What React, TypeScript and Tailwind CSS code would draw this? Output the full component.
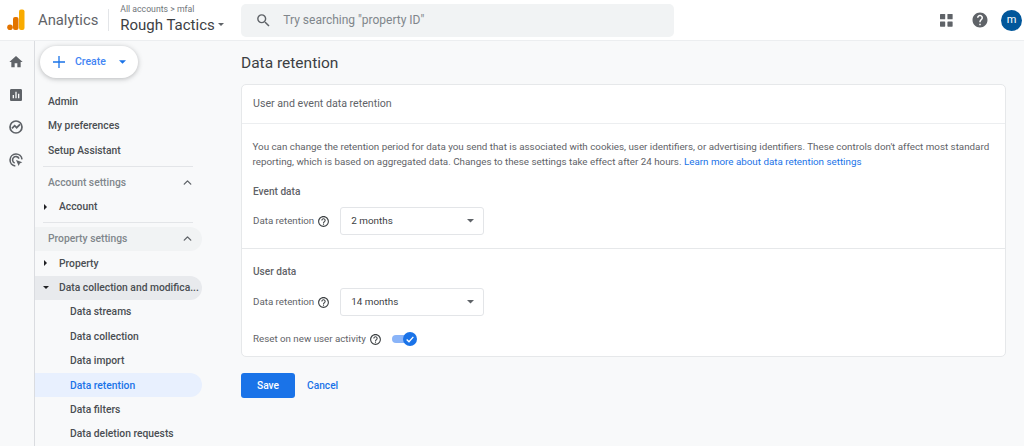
import { ChevronUp } from "lucide-react";

function Caret({ className }: { className: string }) {
  return (
    <svg viewBox="0 0 10 5" className={className} fill="currentColor">
      <path d="M0 0h10L5 5z" />
    </svg>
  );
}

function HelpIcon() {
  return (
    <svg viewBox="0 0 24 24" className="w-[13px] h-[13px] text-[#3c4043]" fill="currentColor">
      <path d="M11 18h2v-2h-2v2zm1-16C6.48 2 2 6.48 2 12s4.48 10 10 10 10-4.48 10-10S17.52 2 12 2zm0 18c-4.41 0-8-3.59-8-8s3.59-8 8-8 8 3.59 8 8-3.59 8-8 8zm0-14c-2.21 0-4 1.79-4 4h2c0-1.1.9-2 2-2s2 .9 2 2c0 2-3 1.75-3 5h2c0-2.25 3-2.5 3-5 0-2.21-1.79-4-4-4z" />
    </svg>
  );
}

function Row({ label, indent, active, caret }: { label: string; indent?: boolean; active?: boolean; caret?: "right" | "down" }) {
  return (
    <div
      className={`h-[24.4px] flex items-center rounded-r-full text-[10.3px] font-medium whitespace-nowrap ${
        active ? "bg-[#e8f0fe] text-[#1a73e8]" : caret === "down" ? "bg-[#e8eaed] text-[#4a4e52]" : "text-[#4a4e52]"
      } ${indent ? "pl-[35px]" : caret ? "pl-[24px]" : "pl-[13px]"} relative`}
    >
      {caret === "right" && (
        <svg viewBox="0 0 5 10" className="absolute left-[9px] top-[9px] w-[3px] h-[6px] text-[#202124]" fill="currentColor">
          <path d="M0 0l5 5-5 5z" />
        </svg>
      )}
      {caret === "down" && (
        <svg viewBox="0 0 10 5" className="absolute left-[8px] top-[10px] w-[6px] h-[3px] text-[#202124]" fill="currentColor">
          <path d="M0 0h10L5 5z" />
        </svg>
      )}
      {label}
    </div>
  );
}

function SectionHead({ label, shaded }: { label: string; shaded?: boolean }) {
  return (
    <div
      className={`h-[24.4px] flex items-center justify-between pl-[13px] pr-[8px] rounded-r-full text-[10.3px] font-medium text-[#80868b] ${
        shaded ? "bg-[#f1f3f4]" : ""
      }`}
    >
      {label}
      <ChevronUp className="w-[13px] h-[13px] text-[#5f6368]" strokeWidth={2.5} />
    </div>
  );
}

function Divider() {
  return <div className="h-[7.6px] flex items-center pl-[8px] pr-[9px]"><div className="h-px w-full bg-[#e3e5e8]" /></div>;
}

function RetentionSelect({ value }: { value: string }) {
  return (
    <div className="w-[144px] h-[28px] bg-white border border-[#e3e5e8] rounded-[3px] flex items-center justify-between pl-[10px] pr-[9px] text-[9.9px] text-[#3c4043]">
      {value}
      <Caret className="w-[7px] h-[3.5px] text-[#5f6368]" />
    </div>
  );
}

function RailIcon({ d }: { d: string }) {
  return (
    <svg viewBox="0 0 24 24" className="w-[16px] h-[16px] text-[#5f6368]" fill="currentColor">
      <path d={d} />
    </svg>
  );
}

export default function App() {
  return (
    <div className="w-[1024px] h-[446px] overflow-hidden flex flex-col bg-[#f8f9fa] font-['Roboto',sans-serif]">
      {/* top bar */}
      <header className="h-[41px] shrink-0 bg-white border-b border-[#eceef0] flex items-center">
        <svg viewBox="0 0 18 22" className="w-[18px] h-[22px] ml-[7px]">
          <rect x="12" y="0.5" width="5.5" height="20.5" rx="2" fill="#f9ab00" />
          <rect x="6" y="8" width="5.5" height="13" rx="2" fill="#e37400" />
          <circle cx="3" cy="18.2" r="2.8" fill="#e37400" />
        </svg>
        <span className="ml-[13px] text-[14.8px] text-[#5f6368]">Analytics</span>
        <div className="ml-[10px] w-px h-[22px] bg-[#e3e5e8]" />
        <div className="ml-[11px] w-[121px] flex flex-col">
          <div className="text-[8.7px] leading-[10px] text-[#70757a] mt-[-2px]">All accounts &gt; mfal</div>
          <div className="flex items-center text-[15px] leading-[20px] text-[#3c4043] mt-[1px]">
            Rough Tactics
            <Caret className="w-[6px] h-[3px] ml-[3px] text-[#5f6368]" />
          </div>
        </div>
        <div className="w-[433px] h-[33px] bg-[#f1f3f4] rounded-[5px] flex items-center">
          <svg viewBox="0 0 24 24" className="w-[17px] h-[17px] ml-[14px] text-[#5f6368]" fill="currentColor">
            <path d="M15.5 14h-.79l-.28-.27A6.47 6.47 0 0 0 16 9.5 6.5 6.5 0 1 0 9.5 16c1.61 0 3.09-.59 4.23-1.57l.27.28v.79l5 4.99L20.49 19l-4.99-5zm-6 0C7.01 14 5 11.99 5 9.5S7.01 5 9.5 5 14 7.01 14 9.5 11.99 14 9.5 14z" />
          </svg>
          <span className="ml-[11px] text-[12px] text-[#80868b]">Try searching "property ID"</span>
        </div>
        <div className="ml-auto flex items-center">
          <svg viewBox="0 0 14 14" className="w-[13px] h-[13px] text-[#5f6368]" fill="currentColor">
            <rect x="0" y="0" width="5.6" height="5.6" rx="0.6" />
            <rect x="8" y="0" width="5.6" height="5.6" rx="0.6" />
            <rect x="0" y="8" width="5.6" height="5.6" rx="0.6" />
            <rect x="8" y="8" width="5.6" height="5.6" rx="0.6" />
          </svg>
          <svg viewBox="0 0 24 24" className="ml-[18px] w-[18px] h-[18px] text-[#5f6368]" fill="currentColor">
            <path d="M12 2C6.48 2 2 6.48 2 12s4.48 10 10 10 10-4.48 10-10S17.52 2 12 2zm1 17h-2v-2h2v2zm2.07-7.75l-.9.92C13.45 12.9 13 13.5 13 15h-2v-.5c0-1.1.45-2.1 1.17-2.83l1.24-1.26c.37-.36.59-.86.59-1.41 0-1.1-.9-2-2-2s-2 .9-2 2H8c0-2.21 1.79-4 4-4s4 1.79 4 4c0 .88-.36 1.68-.93 2.25z" />
          </svg>
          <div className="ml-[12px] mr-[2px] w-[21px] h-[21px] rounded-full bg-[#01579b] text-white text-[11px] flex items-center justify-center">m</div>
        </div>
      </header>

      <div className="flex-1 flex min-h-0">
        {/* icon rail */}
        <nav className="w-[35px] shrink-0 border-r border-[#dadce0] flex flex-col items-center gap-[16.5px] pt-[13px] pr-[3px]">
          <RailIcon d="M10 20v-6h4v6h5v-8h3L12 3 2 12h3v8z" />
          <RailIcon d="M19 3H5c-1.1 0-2 .9-2 2v14c0 1.1.9 2 2 2h14c1.1 0 2-.9 2-2V5c0-1.1-.9-2-2-2zM9 17H7v-5h2v5zm4 0h-2V7h2v10zm4 0h-2v-7h2v7z" />
          <svg viewBox="0 0 24 24" className="w-[16px] h-[16px] text-[#5f6368]" fill="none" stroke="currentColor" strokeWidth="2.6">
            <circle cx="12" cy="12" r="9" />
            <path d="M6 14l4-4 3 3 5-5" />
          </svg>
          <svg viewBox="0 0 24 24" className="w-[16px] h-[16px] text-[#5f6368]" fill="none" stroke="currentColor" strokeWidth="2.4">
            <path d="M11 21a9 9 0 1 1 10-10" />
            <path d="M10 16.5a5 5 0 1 1 6.5-6.5" />
            <path d="M12 12l9.5 3.5-3.8 1.7-1.7 3.8z" fill="currentColor" stroke="none" />
          </svg>
        </nav>

        {/* sidebar */}
        <aside className="w-[167px] shrink-0 flex flex-col">
          <div className="pl-[5px] pt-[5px] pb-[5px]">
            <div className="w-[98px] h-[32px] bg-white rounded-full shadow-[0_1px_5px_rgba(60,64,67,0.35)] flex items-center pl-[13px] text-[#1a73e8]">
              <svg viewBox="0 0 12 12" className="w-[12px] h-[12px]" fill="none" stroke="currentColor" strokeWidth="1.3">
                <path d="M6 0v12M0 6h12" />
              </svg>
              <span className="ml-[10px] text-[10.5px] font-medium text-[#4285f4]">Create</span>
              <Caret className="ml-[13px] w-[7px] h-[4px]" />
            </div>
          </div>
          <div className="mt-[6.6px]">
            <Row label="Admin" />
            <Row label="My preferences" />
            <Row label="Setup Assistant" />
            <Divider />
            <SectionHead label="Account settings" />
            <Row label="Account" caret="right" />
            <Divider />
            <SectionHead label="Property settings" shaded />
            <Row label="Property" caret="right" />
            <Row label="Data collection and modifica..." caret="down" />
            <Row label="Data streams" indent />
            <Row label="Data collection" indent />
            <Row label="Data import" indent />
            <Row label="Data retention" indent active />
            <Row label="Data filters" indent />
            <Row label="Data deletion requests" indent />
          </div>
        </aside>

        {/* main */}
        <main className="flex-1 min-w-0 pl-[39px] pr-[18px]">
          <h1 className="mt-[12px] text-[15.5px] leading-[20px] text-[#3c4043]">Data retention</h1>
          <section className="mt-[11px] bg-white border border-[#e6e8ea] rounded-[5px] text-[#5f6368]">
            <div className="h-[39px] border-b border-[#eceef0] flex items-center pl-[11px] text-[10.65px]">User and event data retention</div>
            <div className="pl-[10.5px] pt-[16px] text-[9.8px] leading-[14.5px]">
              <p className="whitespace-nowrap">
                You can change the retention period for data you send that is associated with cookies, user identifiers, or advertising identifiers. These controls don't affect most standard
                <br />
                reporting, which is based on aggregated data. Changes to these settings take effect after 24 hours.{" "}
                <span className="text-[#1a73e8]">Learn more about data retention settings</span>
              </p>
            </div>
            <div className="pl-[11px] pt-[16px] text-[10.1px] font-medium leading-[14px] text-[#5f6368]">Event data</div>
            <div className="pl-[11px] mt-[8px] flex items-center text-[9.75px]">
              <span>Data retention</span>
              <span className="ml-[3px] mr-[10px]"><HelpIcon /></span>
              <RetentionSelect value="2 months" />
            </div>
            <div className="h-px bg-[#e6e8ea] mt-[13px]" />
            <div className="pl-[11px] pt-[16px] text-[10.1px] font-medium leading-[14px] text-[#5f6368]">User data</div>
            <div className="pl-[11px] mt-[9px] flex items-center text-[9.75px]">
              <span>Data retention</span>
              <span className="ml-[3px] mr-[10px]"><HelpIcon /></span>
              <RetentionSelect value="14 months" />
            </div>
            <div className="pl-[11px] mt-[11px] h-[24px] mb-[5px] flex items-center text-[9.75px]">
              <span>Reset on new user activity</span>
              <span className="ml-[3px] mr-[10px]"><HelpIcon /></span>
              <div className="relative w-[24px] h-[8px] rounded-full bg-[#8ab4f8]">
                <div className="absolute right-[-1px] top-[-3.5px] w-[14px] h-[14px] rounded-full bg-[#1a73e8] flex items-center justify-center">
                  <svg viewBox="0 0 12 12" className="w-[10px] h-[10px]" fill="none" stroke="white" strokeWidth="1.6">
                    <path d="M2 6.5l2.8 2.8L10 3.5" />
                  </svg>
                </div>
              </div>
            </div>
          </section>
          <div className="mt-[16px] flex items-center">
            <div className="w-[54px] h-[25px] rounded-[3px] bg-[#1a73e8] text-white text-[10.2px] font-medium flex items-center justify-center">Save</div>
            <span className="ml-[12px] text-[10.2px] font-medium text-[#1a73e8]">Cancel</span>
          </div>
        </main>
      </div>
    </div>
  );
}
